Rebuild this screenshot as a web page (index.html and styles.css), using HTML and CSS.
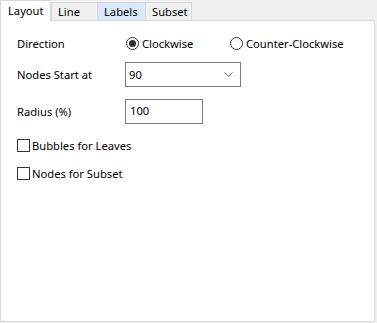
FILE: index.html
```html
<!DOCTYPE html>
<html>
<head>
<meta charset="utf-8">
<link rel="stylesheet" href="styles.css">
</head>
<body>
<div class="tabs">
  <div class="tab selected">Layout</div>
  <div class="tab">Line</div>
  <div class="tab hover">Labels</div>
  <div class="tab">Subset</div>
</div>
<div class="panel">
  <div class="row dir">
    <div class="label">Direction</div>
    <div class="radios">
      <div class="radio cw"><span class="circle on"></span><span>Clockwise</span></div>
      <div class="radio"><span class="circle"></span><span>Counter-Clockwise</span></div>
    </div>
  </div>
  <div class="row sel">
    <div class="label">Nodes Start at</div>
    <div class="combo"><span>90</span>
      <svg width="9" height="5" viewBox="0 0 9 5"><path d="M0.5 0.5 L4.5 4.5 L8.5 0.5" fill="none" stroke="#606060" stroke-width="1"/></svg>
    </div>
  </div>
  <div class="row inp">
    <div class="label">Radius (%)</div>
    <div class="textbox">100</div>
  </div>
  <div class="check first"><span class="box"></span><span>Bubbles for Leaves</span></div>
  <div class="check"><span class="box"></span><span>Nodes for Subset</span></div>
</div>
</body>
</html>
```
FILE: styles.css
```css
html, body {
  margin: 0;
  padding: 0;
  background: #f0f0f0;
  font-family: "Noto Sans", "Liberation Sans", sans-serif;
  font-size: 11.2px;
  color: #000;
  width: 377px;
  height: 323px;
  overflow: hidden;
  white-space: nowrap;
}
.tabs {
  display: flex;
  height: 20px;
  align-items: flex-end;
  position: relative;
  z-index: 1;
}
.tab {
  box-sizing: border-box;
  height: 18px;
  border: 1px solid #d9d9d9;
  border-bottom: none;
  background: #f0f0f0;
  padding-left: 6px;
  line-height: 17px;
  margin-left: -1px;
}
.tab:nth-child(2) { width: 47px; margin-left: 0; }
.tab:nth-child(3) { width: 49px; }
.tab:nth-child(4) { width: 47px; }
.tab.hover { background: #d8eaf9; }
.tab.selected {
  width: 51px;
  height: 21px;
  margin-bottom: -1px;
  background: #fff;
  margin-left: 0;
  padding-left: 7px;
  line-height: 19px;
}
.panel {
  box-sizing: border-box;
  width: 375px;
  height: 302px;
  border: 1px solid #d9d9d9;
  background: #fff;
  padding: 14px 0 0 16px;
}
.row {
  display: flex;
  align-items: center;
}
.label {
  width: 108px;
}
.dir { height: 16px; }
.radios { display: flex; }
.radio {
  display: flex;
  align-items: center;
  gap: 3px;
}
.radio.cw { width: 104px; margin-left: 1px; }
.circle {
  box-sizing: border-box;
  width: 13px;
  height: 13px;
  border: 1px solid #333;
  border-radius: 50%;
  position: relative;
}
.circle.on::after {
  content: "";
  position: absolute;
  left: 2px; top: 2px;
  width: 7px; height: 7px;
  border-radius: 50%;
  background: #333;
}
.sel { margin-top: 11px; }
.combo {
  box-sizing: border-box;
  width: 116px;
  height: 25px;
  border: 1px solid #7a7a7a;
  display: flex;
  align-items: center;
  justify-content: space-between;
  padding: 0 7px 0 3px;
}
.inp { margin-top: 12px; }
.textbox {
  box-sizing: border-box;
  width: 78px;
  height: 25px;
  border: 1px solid #7a7a7a;
  padding: 3px 0 0 4px;
}
.check {
  display: flex;
  align-items: center;
  gap: 2px;
  height: 16px;
  margin-top: 12px;
}
.check.first { margin-top: 13px; }
.box {
  box-sizing: border-box;
  width: 13px;
  height: 13px;
  border: 1px solid #333;
}
```
